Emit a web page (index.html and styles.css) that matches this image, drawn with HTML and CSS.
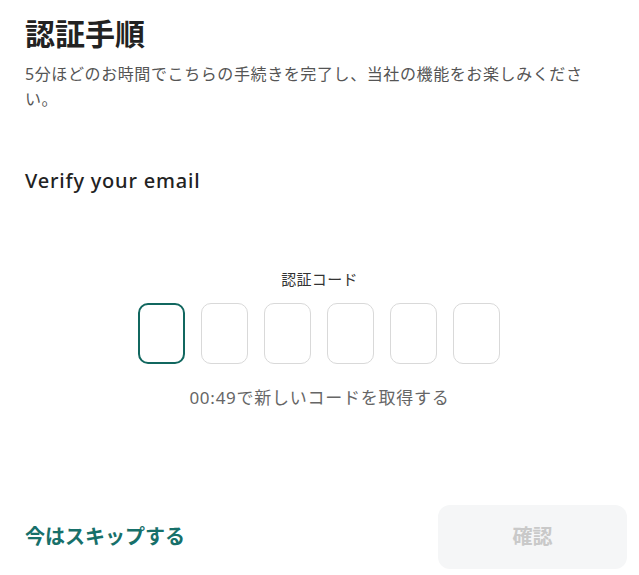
FILE: index.html
```html
<!DOCTYPE html>
<html lang="ja">
<head>
<meta charset="utf-8">
<link rel="stylesheet" href="styles.css">
</head>
<body>
<main class="content">
  <h1 class="title">認証手順</h1>
  <p class="lead">5分ほどのお時間でこちらの手続きを完了し、当社の機能をお楽しみください。</p>
  <h2 class="subtitle">Verify your email</h2>
  <section class="code">
    <div class="code-label">認証コード</div>
    <div class="code-boxes">
      <div class="box active"></div>
      <div class="box"></div>
      <div class="box"></div>
      <div class="box"></div>
      <div class="box"></div>
      <div class="box"></div>
    </div>
    <div class="resend">00:49で新しいコードを取得する</div>
  </section>
</main>
<footer class="footer">
  <a class="skip">今はスキップする</a>
  <button class="confirm" disabled>確認</button>
</footer>
</body>
</html>
```

FILE: styles.css
```css
html, body {
  margin: 0;
  padding: 0;
  background: #ffffff;
}
body {
  font-family: "Noto Sans", "Noto Sans CJK JP", sans-serif;
  color: #222;
  width: 639px;
  height: 575px;
  overflow: hidden;
}
.content {
  padding: 0 25px;
}
.title {
  margin: 14px 0 0;
  font-family: "Noto Sans CJK JP", sans-serif;
  font-size: 30px;
  line-height: 36px;
  font-weight: 700;
  color: #222;
}
.lead {
  margin: 12px 0 0;
  font-size: 16px;
  line-height: 25px;
  color: #555;
  letter-spacing: 0.6px;
}
.subtitle {
  margin: 55px 0 0;
  font-size: 20px;
  line-height: 28px;
  font-weight: 500;
  color: #222;
  letter-spacing: 0.8px;
}
.code {
  display: flex;
  flex-direction: column;
  align-items: center;
  margin-top: 74px;
}
.code-label {
  font-size: 15px;
  line-height: 20px;
  color: #333;
  letter-spacing: 0.3px;
}
.code-boxes {
  display: flex;
  gap: 16px;
  margin-top: 14px;
  margin-right: 2px;
}
.box {
  width: 47px;
  height: 61px;
  box-sizing: border-box;
  border: 1px solid #d9d9d9;
  border-radius: 10px;
}
.box.active {
  border: 2px solid #11675f;
}
.resend {
  margin-top: 22px;
  font-size: 17px;
  line-height: 24px;
  color: #666;
  letter-spacing: 0.75px;
}
.footer {
  display: flex;
  justify-content: space-between;
  align-items: center;
  margin-top: 95px;
  padding: 0 12px 0 25px;
}
.skip {
  font-family: "Noto Sans CJK JP", sans-serif;
  font-size: 20px;
  line-height: 24px;
  font-weight: 700;
  color: #17706a;
  margin-top: -3px;
}
.confirm {
  width: 189px;
  height: 64px;
  border: none;
  border-radius: 12px;
  background: #f5f6f7;
  font-family: "Noto Sans CJK JP", sans-serif;
  font-size: 20px;
  line-height: 24px;
  font-weight: 700;
  color: #c9c9c9;
  padding: 0 0 3px;
}
```
